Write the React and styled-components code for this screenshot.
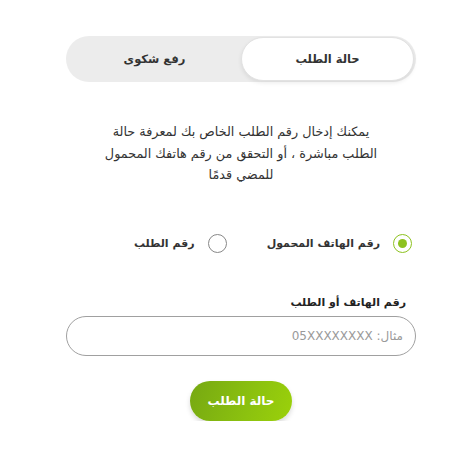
import styled, { createGlobalStyle } from "styled-components";
import { useState } from "react";

const GlobalStyle = createGlobalStyle`
  body {
    margin: 0;
    background: #fff;
    font-family: "DejaVu Sans", "Noto Sans", sans-serif;
  }
`;

const Page = styled.div`
  direction: rtl;
  width: 350px;
  margin-left: 66px;
  padding-top: 36px;
  display: flex;
  flex-direction: column;
`;

const Tabs = styled.div`
  display: grid;
  grid-template-columns: 1fr 1fr;
  height: 46px;
  background: #ececec;
  border-radius: 23px;
  padding: 1px 2px;
  box-sizing: border-box;
`;

const Tab = styled.button`
  font-family: inherit;
  font-size: 11.5px;
  font-weight: 700;
  color: #333;
  border: ${(p) => (p.$active ? "1px solid #e2e2e2" : "none")};
  background: ${(p) => (p.$active ? "#fff" : "transparent")};
  box-shadow: ${(p) => (p.$active ? "0 2px 4px rgba(0,0,0,0.08)" : "none")};
  border-radius: 22px;
  cursor: pointer;
`;

const Intro = styled.p`
  margin: 39px auto 0;
  width: 284px;
  text-align: center;
  font-size: 12.8px;
  line-height: 21.5px;
  color: #333;
`;

const Options = styled.div`
  display: flex;
  gap: 40px;
  margin-top: 48px;
  padding-right: 4px;
`;

const Option = styled.label`
  display: flex;
  align-items: center;
  gap: 13px;
  font-size: 11px;
  font-weight: 700;
  color: #333;
  cursor: pointer;
`;

const Dot = styled.span`
  width: 19px;
  height: 19px;
  border-radius: 50%;
  box-sizing: border-box;
  border: 1.5px solid ${(p) => (p.$on ? "#8dc21f" : "#888")};
  display: flex;
  align-items: center;
  justify-content: center;

  &::after {
    content: "";
    width: 9px;
    height: 9px;
    border-radius: 50%;
    background: ${(p) => (p.$on ? "#8dc21f" : "transparent")};
  }
`;

const FieldLabel = styled.div`
  margin-top: 43px;
  padding-right: 10px;
  font-size: 11px;
  font-weight: 700;
  color: #222;
`;

const Input = styled.input`
  margin-top: 7px;
  height: 40px;
  box-sizing: border-box;
  border: 1px solid #a0a0a0;
  border-radius: 20px;
  padding: 0 12px;
  font-family: inherit;
  font-size: 12px;
  color: #333;
  outline: none;

  &::placeholder {
    color: #9a9a9a;
  }
`;

const Submit = styled.button`
  align-self: center;
  margin-top: 25px;
  width: 102px;
  height: 40px;
  border: none;
  border-radius: 20px;
  background: linear-gradient(110deg, #76a812 0%, #8cc20f 60%, #9bd10a 100%);
  box-shadow: 0 3px 5px rgba(0, 0, 0, 0.15);
  color: #fff;
  font-family: inherit;
  font-size: 12px;
  font-weight: 700;
  cursor: pointer;
`;

function App() {
  const [tab, setTab] = useState("status");
  const [mode, setMode] = useState("phone");

  return (
    <>
      <GlobalStyle />
      <Page>
        <Tabs>
          <Tab $active={tab === "status"} onClick={() => setTab("status")}>
            حالة الطلب
          </Tab>
          <Tab $active={tab === "complaint"} onClick={() => setTab("complaint")}>
            رفع شكوى
          </Tab>
        </Tabs>

        <Intro>
          يمكنك إدخال رقم الطلب الخاص بك لمعرفة حالة الطلب مباشرة ، أو التحقق من رقم هاتفك المحمول للمضي قدمًا
        </Intro>

        <Options>
          <Option onClick={() => setMode("phone")}>
            <Dot $on={mode === "phone"} />
            رقم الهاتف المحمول
          </Option>
          <Option onClick={() => setMode("order")}>
            <Dot $on={mode === "order"} />
            رقم الطلب
          </Option>
        </Options>

        <FieldLabel>رقم الهاتف أو الطلب</FieldLabel>
        <Input placeholder="مثال: 05XXXXXXXX" />

        <Submit>حالة الطلب</Submit>
      </Page>
    </>
  );
}

export default App;
